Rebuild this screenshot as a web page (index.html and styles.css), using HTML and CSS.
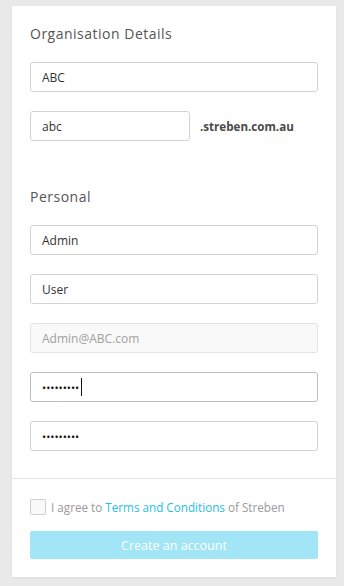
FILE: index.html
```html
<!DOCTYPE html>
<html>
<head>
<meta charset="utf-8">
<link rel="stylesheet" href="styles.css">
</head>
<body>
<div class="card">
  <div class="form">
    <h3 class="heading">Organisation Details</h3>
    <input class="field" type="text" value="ABC">
    <div class="domain-row">
      <input class="field field-short" type="text" value="abc">
      <span class="domain">.streben.com.au</span>
    </div>
    <h3 class="heading heading-personal">Personal</h3>
    <input class="field" type="text" value="Admin">
    <input class="field" type="text" value="User">
    <input class="field field-disabled" type="text" value="Admin@ABC.com" readonly>
    <div class="focus-wrap">
      <input class="field field-focus" type="password" value="admin1234">
      <span class="caret"></span>
    </div>
    <input class="field" type="password" value="admin1234">
  </div>
  <div class="footer">
    <label class="agree">
      <span class="checkbox"></span>
      <span>I agree to <a class="link" href="#">Terms and Conditions</a> of Streben</span>
    </label>
    <button class="submit" type="button">Create an account</button>
  </div>
</div>
</body>
</html>
```
FILE: styles.css
```css
* { box-sizing: border-box; }
html, body { margin: 0; padding: 0; }
body {
  background: #e9e9e9;
  font-family: "Open Sans", "Liberation Sans", sans-serif;
  width: 344px;
  height: 586px;
  padding-top: 6px;
  padding-left: 12px;
}
.card {
  width: 324px;
  background: #fff;
  box-shadow: 0 1px 2px rgba(0,0,0,0.06);
}
.form {
  padding: 18px 18px 8px 18px;
  display: flex;
  flex-direction: column;
}
.heading {
  margin: 0 0 18px 0;
  font-size: 14px;
  line-height: 20px;
  font-weight: 400;
  color: #555;
  letter-spacing: 0.5px;
}
.heading-personal { margin-top: 27px; }
.field {
  display: block;
  width: 288px;
  height: 30px;
  margin: 0 0 19px 0;
  padding: 0 11px;
  border: 1px solid #d3d3d3;
  border-radius: 3px;
  background: #fff;
  font-family: "Open Sans", "Liberation Sans", sans-serif;
  font-size: 12px;
  color: #333;
  outline: none;
}
.field-short { width: 160px; margin: 0; }
.domain-row {
  display: flex;
  align-items: center;
  gap: 10px;
  margin-bottom: 19px;
}
.domain {
  font-size: 11.6px;
  font-weight: 700;
  color: #4a4a4a;
}
.field-disabled {
  background: #f9f9f9;
  border-color: #e4e4e4;
  color: #a0a0a0;
}
.focus-wrap { position: relative; }
.field-focus { border-color: #bdbdbd; }
.caret {
  position: absolute;
  left: 51px;
  top: 6px;
  width: 1px;
  height: 18px;
  background: #111;
}
input[type="password"] { letter-spacing: 0; font-size: 11px; color: #111; }
.footer {
  border-top: 1px solid #e4e4e4;
  padding: 20px 18px 18px 18px;
  display: flex;
  flex-direction: column;
  gap: 16px;
}
.agree {
  display: flex;
  align-items: center;
  gap: 5px;
  font-size: 11.7px;
  color: #9a9a9a;
}
.checkbox {
  width: 16px;
  height: 16px;
  border: 1px solid #cfcfcf;
  border-radius: 2px;
  background: #f9f9f9;
}
.link { color: #29bde3; text-decoration: none; }
.submit {
  width: 288px;
  height: 28px;
  border: 0;
  border-radius: 2px;
  background: #a1e5f6;
  color: #fff;
  font-family: "Open Sans", "Liberation Sans", sans-serif;
  font-size: 12.5px;
  padding: 0;
}
```
